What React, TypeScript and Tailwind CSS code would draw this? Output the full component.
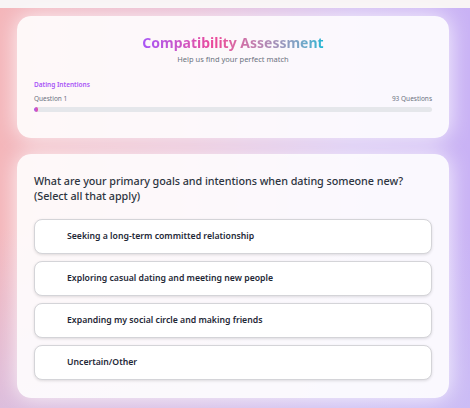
import React from "react";

const options = [
  "Seeking a long-term committed relationship",
  "Exploring casual dating and meeting new people",
  "Expanding my social circle and making friends",
  "Uncertain/Other",
];

export default function App() {
  return (
    <div
      className="w-[470px] h-[408px] overflow-hidden flex flex-col bg-[#f8f4f5]"
      style={{ fontFamily: '"Noto Sans", "Open Sans", sans-serif' }}
    >
      <div className="h-[8px] shrink-0 bg-[#f8f4f5]" />
      <div className="flex-1 flex flex-col gap-[16px] pl-[17px] pr-[21px] pt-[8px] bg-[linear-gradient(180deg,rgba(210,195,245,0)_55%,rgba(205,195,245,0.6)_100%),linear-gradient(90deg,#f4b6ba_0%,#e7b9d2_40%,#d2bdf2_75%,#c9b2f5_100%)]">
        <div className="h-[122px] shrink-0 rounded-[14px] bg-white/90 shadow-[0_0_22px_rgba(255,255,255,0.85)] px-[17px] pt-[17px] flex flex-col">
          <h1 className="text-center text-[14px] leading-[20px] font-bold">
            <span className="bg-gradient-to-r from-[#a855f7] via-[#ec4899] via-40% to-[#06b6d4] bg-clip-text text-transparent">
              Compatibility Assessment
            </span>
          </h1>
          <p className="text-center text-[7.5px] leading-[10px] text-[#6b7280] mt-[1px]">
            Help us find your perfect match
          </p>
          <div className="mt-[16px] text-[6.5px] leading-[9px] font-semibold text-[#a855f7]">
            Dating Intentions
          </div>
          <div className="mt-[5px] flex justify-between text-[6.5px] leading-[9px] text-[#6b7280]">
            <span>Question 1</span>
            <span>93 Questions</span>
          </div>
          <div className="mt-[4px] h-[5px] rounded-full bg-[#e5e7eb] overflow-hidden">
            <div className="h-full w-[4px] rounded-full bg-gradient-to-r from-[#a855f7] to-[#ec4899]" />
          </div>
        </div>

        <div className="h-[244px] shrink-0 rounded-[14px] bg-white/90 shadow-[0_0_22px_rgba(255,255,255,0.85)] px-[17px] pt-[19px] flex flex-col">
          <h2 className="text-[10.8px] leading-[15px] tracking-[-0.05px] font-medium text-[#2d3440]">
            What are your primary goals and intentions when dating someone new? (Select all that apply)
          </h2>
          <div className="mt-[16px] flex flex-col gap-[7px]">
            {options.map((o) => (
              <div
                key={o}
                className="h-[35px] rounded-[8px] border border-[#d4d4d8] bg-white shadow-[0_1px_3px_rgba(0,0,0,0.12)] flex items-center pl-[32px] text-[8.7px] font-semibold text-[#1f2937]"
              >
                {o}
              </div>
            ))}
          </div>
        </div>
      </div>
    </div>
  );
}
